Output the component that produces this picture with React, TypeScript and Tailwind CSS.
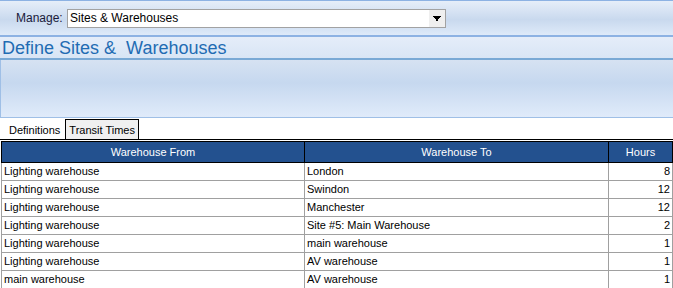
const rows = [
  { from: "Lighting warehouse", to: "London", hours: 8 },
  { from: "Lighting warehouse", to: "Swindon", hours: 12 },
  { from: "Lighting warehouse", to: "Manchester", hours: 12 },
  { from: "Lighting warehouse", to: "Site #5: Main Warehouse", hours: 2 },
  { from: "Lighting warehouse", to: "main warehouse", hours: 1 },
  { from: "Lighting warehouse", to: "AV warehouse", hours: 1 },
  { from: "main warehouse", to: "AV warehouse", hours: 1 },
];

export default function App() {
  return (
    <div className="w-[673px] h-[288px] overflow-hidden bg-white font-['Liberation_Sans',Arial,sans-serif] text-[11px] text-black">
      {/* Manage bar */}
      <div className="h-[37px] border-t border-b-2 border-[#8db2e3] bg-[linear-gradient(#e6eef9,#c9d9ee_55%,#deeaf9)] flex items-center">
        <span className="ml-4 w-[51px] text-[12px] text-[#1a1a3a]">Manage:</span>
        <div className="w-[379px] h-[19px] border border-[#a2a2a2] bg-white flex items-center">
          <span className="flex-1 pl-[2px] text-[12px]">Sites &amp; Warehouses</span>
          <span className="w-[16px] h-[17px] bg-[#efefef] flex items-center justify-center">
            <svg width="8" height="5" viewBox="0 0 8 5">
              <path d="M0 0h8v1H7v1H6v1H5v1H4v1H4V4H3V3H2V2H1V1H0z" fill="#000" />
              <rect x="3" y="3" width="2" height="2" fill="#000" />
            </svg>
          </span>
        </div>
      </div>

      {/* Title band */}
      <div className="h-[23px] border-b-2 border-[#79a9d5] bg-[linear-gradient(#e5edf9,#d8e5f5)] flex items-center">
        <span className="pl-[2px] text-[18px] leading-none text-[#1f6cb3] whitespace-pre">Define Sites &amp;  Warehouses</span>
      </div>

      {/* Empty header panel */}
      <div className="h-[58px] border-l border-b border-[#9fbfe6] bg-[linear-gradient(#d6e2f2,#c6d8ef_40%,#e0ebfa)]" />

      {/* Tabs */}
      <div className="h-[22px] flex items-end pl-[4px] border-b border-black">
        <div className="h-[19px] px-[5px] pt-[2px] flex items-center text-[11px]">Definitions</div>
        <div className="h-[20px] px-[3px] pt-[2px] flex items-center border border-b-0 border-black bg-[#f0f0f0] text-[11px]">
          Transit Times
        </div>
      </div>

      {/* Grid */}
      <table className="ml-px mt-px w-[671px] border-collapse table-fixed">
        <colgroup>
          <col className="w-[303px]" />
          <col className="w-[304px]" />
          <col className="w-[64px]" />
        </colgroup>
        <thead>
          <tr className="h-[21px] bg-[#23518f] text-white">
            <th className="border border-black font-normal text-center p-0">Warehouse From</th>
            <th className="border border-black font-normal text-center p-0">Warehouse To</th>
            <th className="border border-black font-normal text-center p-0">Hours</th>
          </tr>
        </thead>
        <tbody>
          {rows.map((r, i) => (
            <tr key={i} className="h-[18px]">
              <td className="border border-[#a0a0a0] px-[2px] py-0 whitespace-nowrap">{r.from}</td>
              <td className="border border-[#a0a0a0] px-[2px] py-0 whitespace-nowrap">{r.to}</td>
              <td className="border border-[#a0a0a0] px-[2px] py-0 text-right">{r.hours}</td>
            </tr>
          ))}
        </tbody>
      </table>
    </div>
  );
}
